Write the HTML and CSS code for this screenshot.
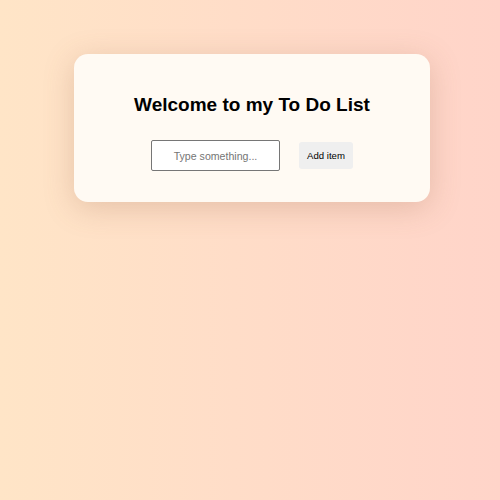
FILE: index.html
```html
<!DOCTYPE html>
<html>
<head>
<meta charset="utf-8">
<link rel="stylesheet" href="styles.css">
</head>
<body>
<div class="card">
  <h1 class="title">Welcome to my To Do List</h1>
  <div class="form">
    <input class="field" type="text" placeholder="Type something...">
    <button class="add">Add item</button>
  </div>
</div>
</body>
</html>
```
FILE: styles.css
```css
html, body {
  margin: 0;
  height: 100%;
}
body {
  background: linear-gradient(to right, #ffe5c7, #ffd4c9);
  font-family: "Liberation Sans", Arial, sans-serif;
  padding-top: 54px;
  box-sizing: border-box;
}
.card {
  width: 356px;
  height: 148px;
  margin-left: 74px;
  box-sizing: border-box;
  background: #fffaf3;
  border-radius: 14px;
  box-shadow: 0 6px 30px rgba(150, 100, 70, 0.25);
  display: flex;
  flex-direction: column;
  align-items: center;
  padding-top: 39px;
}
.title {
  margin: 0;
  font-size: 19px;
  font-weight: bold;
  color: #000;
  line-height: 23px;
}
.form {
  display: flex;
  align-items: center;
  gap: 19px;
  margin-top: 24px;
}
.field {
  width: 129px;
  height: 31px;
  box-sizing: border-box;
  border: 1px solid #767676;
  border-radius: 2px;
  background: #fff;
  text-align: center;
  font-family: "Liberation Sans", Arial, sans-serif;
  font-size: 10.6px;
  padding: 0 6px;
}
.field::placeholder {
  color: #757575;
}
.add {
  width: 54px;
  height: 27px;
  border: none;
  border-radius: 3px;
  background: #efefef;
  font-family: "Liberation Sans", Arial, sans-serif;
  font-size: 9.6px;
  color: #000;
  padding: 0;
}
```
